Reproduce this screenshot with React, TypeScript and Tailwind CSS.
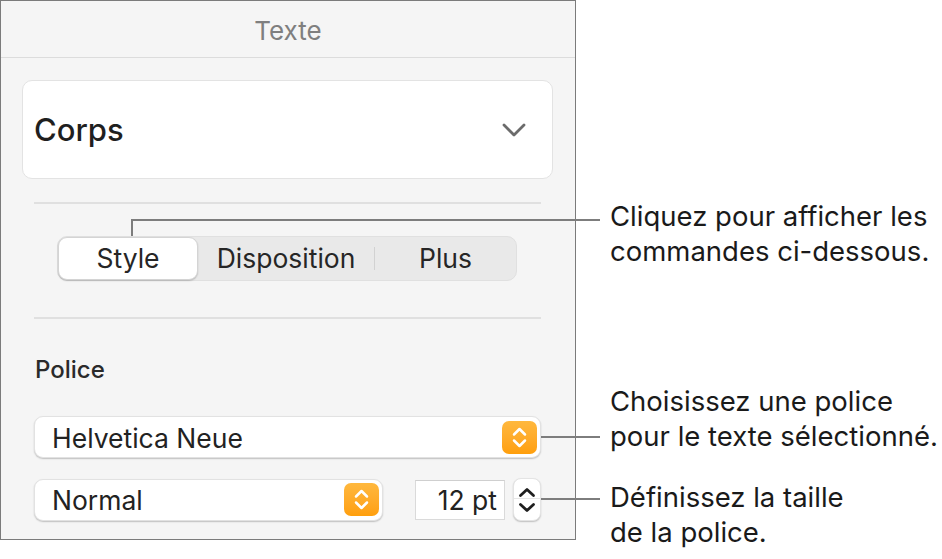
import React from 'react';

const Chevron = () => (
  <svg width="24" height="14" viewBox="0 0 24 14" fill="none">
    <path d="M2 2 L12 12 L22 2" stroke="#6b6b6b" strokeWidth="2.8" strokeLinecap="round" strokeLinejoin="round" />
  </svg>
);

// orange popup arrows
const PopupArrows = () => (
  <div className="w-[35px] h-[33px] rounded-[7px] bg-gradient-to-b from-[#ffb83d] to-[#ff9f0a] flex items-center justify-center">
    <svg width="35" height="33" viewBox="0 0 35 33" fill="none">
      <path d="M12 13.5 L17.5 8 L23 13.5" stroke="#fff" strokeWidth="2.5" strokeLinecap="round" strokeLinejoin="round" />
      <path d="M12 19.5 L17.5 25 L23 19.5" stroke="#fff" strokeWidth="2.5" strokeLinecap="round" strokeLinejoin="round" />
    </svg>
  </div>
);

const Stepper = () => (
  <div className="w-[28px] h-[43px] rounded-[8px] bg-white border border-[#e4e4e4] shadow-[0_1px_1.5px_rgba(0,0,0,0.22)] flex flex-col">
    <div className="h-[20px] border-b border-[#e6e6e6] flex items-end justify-center">
      <svg width="18" height="11" viewBox="0 0 18 11" fill="none">
        <path d="M2.5 8.5 L9 2.5 L15.5 8.5" stroke="#1f1f1f" strokeWidth="2.8" strokeLinecap="round" strokeLinejoin="round" />
      </svg>
    </div>
    <div className="flex-1 flex items-start justify-center pt-[3px]">
      <svg width="18" height="11" viewBox="0 0 18 11" fill="none">
        <path d="M2.5 2.5 L9 8.5 L15.5 2.5" stroke="#1f1f1f" strokeWidth="2.8" strokeLinecap="round" strokeLinejoin="round" />
      </svg>
    </div>
  </div>
);

const Popup = ({ label, width }: { label: string; width: string }) => (
  <div className={`${width} h-[42px] rounded-[9px] bg-white border border-[#e2e2e2] shadow-[0_1px_1.5px_rgba(0,0,0,0.22)] flex items-center justify-between pl-[17px] pr-[3px]`}>
    <span className="pt-[3px] text-[26.5px] text-[#222]">{label}</span>
    <PopupArrows />
  </div>
);

export default function App() {
  return (
    <div className="relative w-[942px] h-[559px] bg-white flex font-['Inter','Liberation_Sans',sans-serif]">
      {/* Inspector panel */}
      <div className="w-[576px] h-[540px] border border-[#7b7b7b] bg-[#f5f5f5] flex flex-col">
        <div className="h-[57px] border-b border-[#dcdcdc] flex items-center justify-center">
          <span className="pt-[3px] text-[26px] text-[#7f7f7f]">Texte</span>
        </div>

        <div className="pl-[21px] pr-[22px] flex flex-col">
          <div className="mt-[22px] h-[99px] rounded-[10px] bg-white border border-[#e3e3e3] flex items-center justify-between pl-[11px] pr-[26px]">
            <span className="pt-[2px] text-[31px] font-medium text-[#1f1f1f]">Corps</span>
            <Chevron />
          </div>

          <div className="mt-[23px] mx-[12px] h-[2px] bg-[#e0e0e0]" />

          {/* segmented control */}
          <div className="mt-[32px] ml-[35px] w-[460px] h-[45px] rounded-[10px] bg-[#e9e9e9] border border-[#e0e0e0] flex items-stretch text-[26.5px] text-[#262626]">
            <div className="w-[140px] rounded-[9px] bg-white border border-[#d4d4d4] shadow-[0_1px_1.5px_rgba(0,0,0,0.2)] flex items-center justify-center">
              Style
            </div>
            <div className="w-[176px] flex items-center justify-center">Disposition</div>
            <div className="w-px my-[10px] bg-[#d2d2d2]" />
            <div className="flex-1 flex items-center justify-center">Plus</div>
          </div>

          <div className="mt-[36px] mx-[12px] h-[2px] bg-[#e0e0e0]" />

          <div className="mt-[39px] ml-[13px] h-[24px] leading-[24px] text-[24px] font-medium text-[#2a2a2a]">
            Police
          </div>

          <div className="mt-[34px] ml-[12px]">
            <Popup label="Helvetica Neue" width="w-[507px]" />
          </div>

          <div className="mt-[20px] ml-[12px] flex items-center">
            <Popup label="Normal" width="w-[349px]" />
            <div className="ml-[32px] w-[90px] h-[40px] bg-white border border-[#dadada] border-t-[#cfcfcf] flex items-center justify-end pr-[7px]">
              <span className="pt-[2px] text-[26.5px] text-[#222]">12 pt</span>
            </div>
            <div className="ml-[8px]">
              <Stepper />
            </div>
          </div>
        </div>
      </div>

      {/* Callouts */}
      <div className="pl-[34px] pt-[199px] flex flex-col text-[27.5px] leading-[35px] text-[#1a1a1a] whitespace-nowrap">
        <div>
          <div>Cliquez pour afficher les</div>
          <div>commandes ci-dessous.</div>
        </div>
        <div className="mt-[115px]">
          <div>Choisissez une police</div>
          <div>pour le texte sélectionné.</div>
        </div>
        <div className="mt-[26px]">
          <div>Définissez la taille</div>
          <div>de la police.</div>
        </div>
      </div>

      {/* leader lines */}
      <div className="absolute left-[131px] top-[219px] w-[2px] h-[17px] bg-[#7d7d7d]" />
      <div className="absolute left-[131px] top-[219px] w-[469px] h-[2px] bg-[#7d7d7d]" />
      <div className="absolute left-[541px] top-[436px] w-[59px] h-[2px] bg-[#7d7d7d]" />
      <div className="absolute left-[541px] top-[498px] w-[59px] h-[2px] bg-[#7d7d7d]" />
    </div>
  );
}
